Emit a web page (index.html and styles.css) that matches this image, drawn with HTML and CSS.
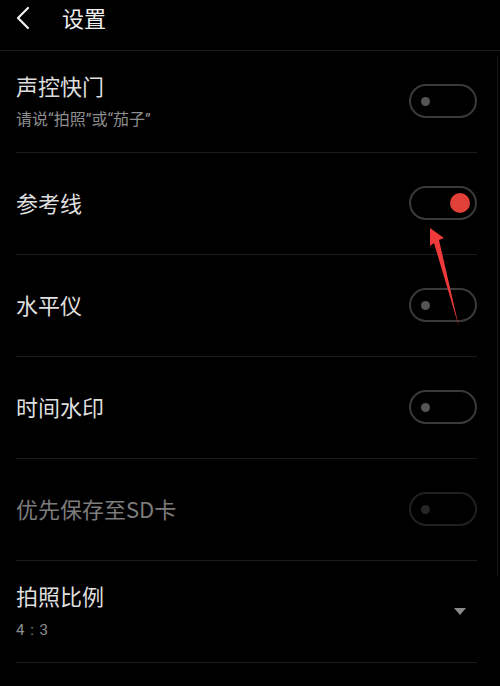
FILE: index.html
```html
<!DOCTYPE html>
<html lang="zh-CN">
<head>
<meta charset="utf-8">
<title>设置</title>
<link rel="stylesheet" href="styles.css">
</head>
<body>
<div class="screen">
  <header class="header">
    <svg class="back" width="16" height="24" viewBox="0 0 16 24"><path d="M13 2 L3 12 L13 22" fill="none" stroke="#f2f2f2" stroke-width="2.2" stroke-linecap="round" stroke-linejoin="round"/></svg>
    <h1 class="title">设置</h1>
  </header>
  <ul class="list">
    <li class="row">
      <div class="text">
        <div class="label">声控快门</div>
        <div class="sub">请说“拍照”或“茄子”</div>
      </div>
      <div class="toggle"><span class="knob"></span></div>
    </li>
    <li class="row">
      <div class="text"><div class="label">参考线</div></div>
      <div class="toggle on"><span class="knob"></span></div>
    </li>
    <li class="row">
      <div class="text"><div class="label">水平仪</div></div>
      <div class="toggle"><span class="knob"></span></div>
    </li>
    <li class="row">
      <div class="text"><div class="label">时间水印</div></div>
      <div class="toggle"><span class="knob"></span></div>
    </li>
    <li class="row disabled">
      <div class="text"><div class="label">优先保存至SD卡</div></div>
      <div class="toggle"><span class="knob"></span></div>
    </li>
    <li class="row">
      <div class="text">
        <div class="label">拍照比例</div>
        <div class="sub ratio">4 : 3</div>
      </div>
      <div class="drop"><span class="tri"></span></div>
    </li>
  </ul>
  <div class="scrollbar"></div>
  <svg class="arrow" width="500" height="686" viewBox="0 0 500 686"><polygon points="430,228 444,238 439,240 459,327 434,243 430,246" fill="#f0393a"/></svg>
</div>
</body>
</html>
```
FILE: styles.css
```css
* { box-sizing: border-box; }
html, body { margin: 0; padding: 0; background: #000; }
body {
  font-family: "Noto Sans CJK SC", "Noto Sans", sans-serif;
  color: #e0e0e0;
}
.screen {
  position: relative;
  width: 500px;
  height: 686px;
  overflow: hidden;
  background: #000;
}
.header {
  height: 51px;
  display: flex;
  align-items: flex-start;
  padding: 4px 0 0 15px;
  border-bottom: 1px solid #1a1a1a;
}
.back { display: block; flex: none; margin-top: 2px; }
.title {
  margin: 0 0 0 31px;
  font-size: 22px;
  font-weight: 400;
  color: #f0f0f0;
  line-height: 26px;
}
.list {
  list-style: none;
  margin: 0 23px 0 16px;
  padding: 0;
}
.row {
  height: 102px;
  display: flex;
  align-items: center;
  justify-content: space-between;
  border-bottom: 1px solid #1c1c1c;
}
.text { display: flex; flex-direction: column; gap: 11px; padding-bottom: 3px; }
.label {
  font-size: 22px;
  line-height: 28px;
  color: #dedede;
}
.sub {
  font-family: "Roboto", "Noto Sans CJK SC", sans-serif;
  font-size: 16px;
  line-height: 20px;
  color: #8e8e8e;
}
.ratio {
  font-size: 15px;
  letter-spacing: 1px;
}
.disabled .label { color: #7c7c7c; }
.toggle {
  width: 68px;
  height: 34px;
  border: 2px solid #3a3a3a;
  border-radius: 17px;
  display: flex;
  align-items: center;
  padding: 0 10px;
  margin-bottom: 1px;
}
.knob {
  width: 9px;
  height: 9px;
  border-radius: 50%;
  background: #555;
}
.toggle.on { justify-content: flex-end; padding: 0 5px; }
.toggle.on .knob { width: 20px; height: 20px; background: #e2413a; }
.disabled .toggle { border-color: #202020; }
.disabled .knob { background: #262626; }
.drop {
  width: 68px;
  display: flex;
  justify-content: flex-end;
  padding-right: 11px;
}
.tri {
  width: 0;
  height: 0;
  border-left: 6px solid transparent;
  border-right: 6px solid transparent;
  border-top: 7px solid #8a8a8a;
}
.scrollbar {
  position: absolute;
  right: 2px;
  top: 56px;
  width: 1px;
  height: 520px;
  background: #161616;
}
.arrow { position: absolute; left: 0; top: 0; pointer-events: none; }
```
